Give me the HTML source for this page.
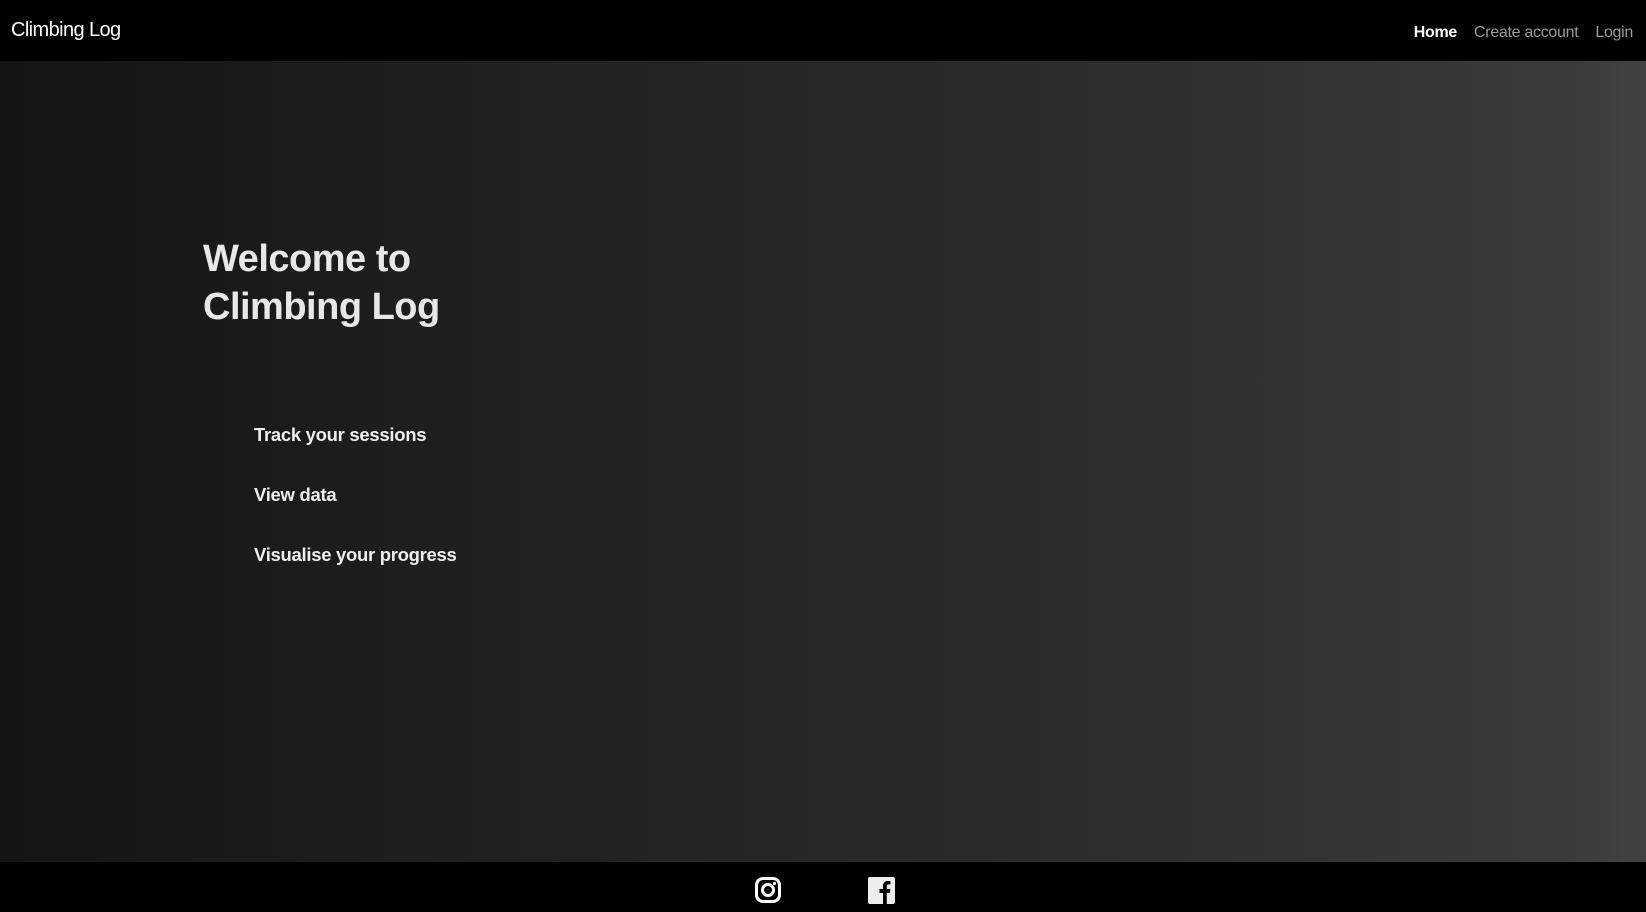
<!DOCTYPE html>
<html><head><style>
*{margin:0;padding:0;box-sizing:border-box}
body{width:1646px;height:912px;overflow:hidden;font-family:"Liberation Sans",sans-serif;background:#000;}
.nav{position:absolute;top:0;left:0;width:1646px;height:61px;background:#000;}
.brand{position:absolute;left:11px;top:19px;color:#fff;font-size:20px;letter-spacing:-0.6px}
.links{position:absolute;right:13px;top:24px;font-size:16px;letter-spacing:-0.3px}
.links span{margin-left:17px;color:#9a9a9a}
.links span.a{color:#fff;font-weight:bold}
.main{position:absolute;top:61px;left:0;width:1646px;height:801px;background:linear-gradient(90deg,#141414 0%,#222 35%,#2c2c2c 65%,#3a3a3a 95%,#424242 100%);}
h1{position:absolute;left:203px;top:174px;color:#e8e8e8;font-size:38px;line-height:48px;font-weight:bold;letter-spacing:-0.5px}
.li{position:absolute;left:254px;color:#eee;font-size:18.5px;font-weight:bold;letter-spacing:-0.3px}
.foot{position:absolute;top:862px;left:0;width:1646px;height:50px;background:#000}
</style></head><body>
<div class="nav"><div class="brand">Climbing Log</div>
<div class="links"><span class="a">Home</span><span>Create account</span><span>Login</span></div></div>
<div class="main">
<h1>Welcome to<br>Climbing Log</h1>
<div class="li" style="top:363px">Track your sessions</div>
<div class="li" style="top:423px">View data</div>
<div class="li" style="top:483px">Visualise your progress</div>
</div>
<div class="foot">
<svg style="position:absolute;left:755px;top:15px" width="26" height="26" viewBox="0 0 26 26"><rect x="1.5" y="1.5" width="23" height="23" rx="6.5" fill="none" stroke="#fff" stroke-width="3"/><circle cx="13" cy="13" r="5.5" fill="none" stroke="#fff" stroke-width="3"/><circle cx="19.5" cy="6.5" r="1.6" fill="#fff"/></svg>
<svg style="position:absolute;left:868px;top:15px" width="27" height="27" viewBox="0 0 27 27"><rect width="27" height="27" rx="2" fill="#eee"/><path d="M15 27V16h-3.5v-4H15V9c0-3.2 2-5 4.8-5 1.3 0 2.4.1 2.7.1v3.3h-1.9c-1.5 0-1.8.7-1.8 1.8V12h3.6l-.5 4h-3.1v11z" fill="#000"/></svg>
</div>
</body></html>
